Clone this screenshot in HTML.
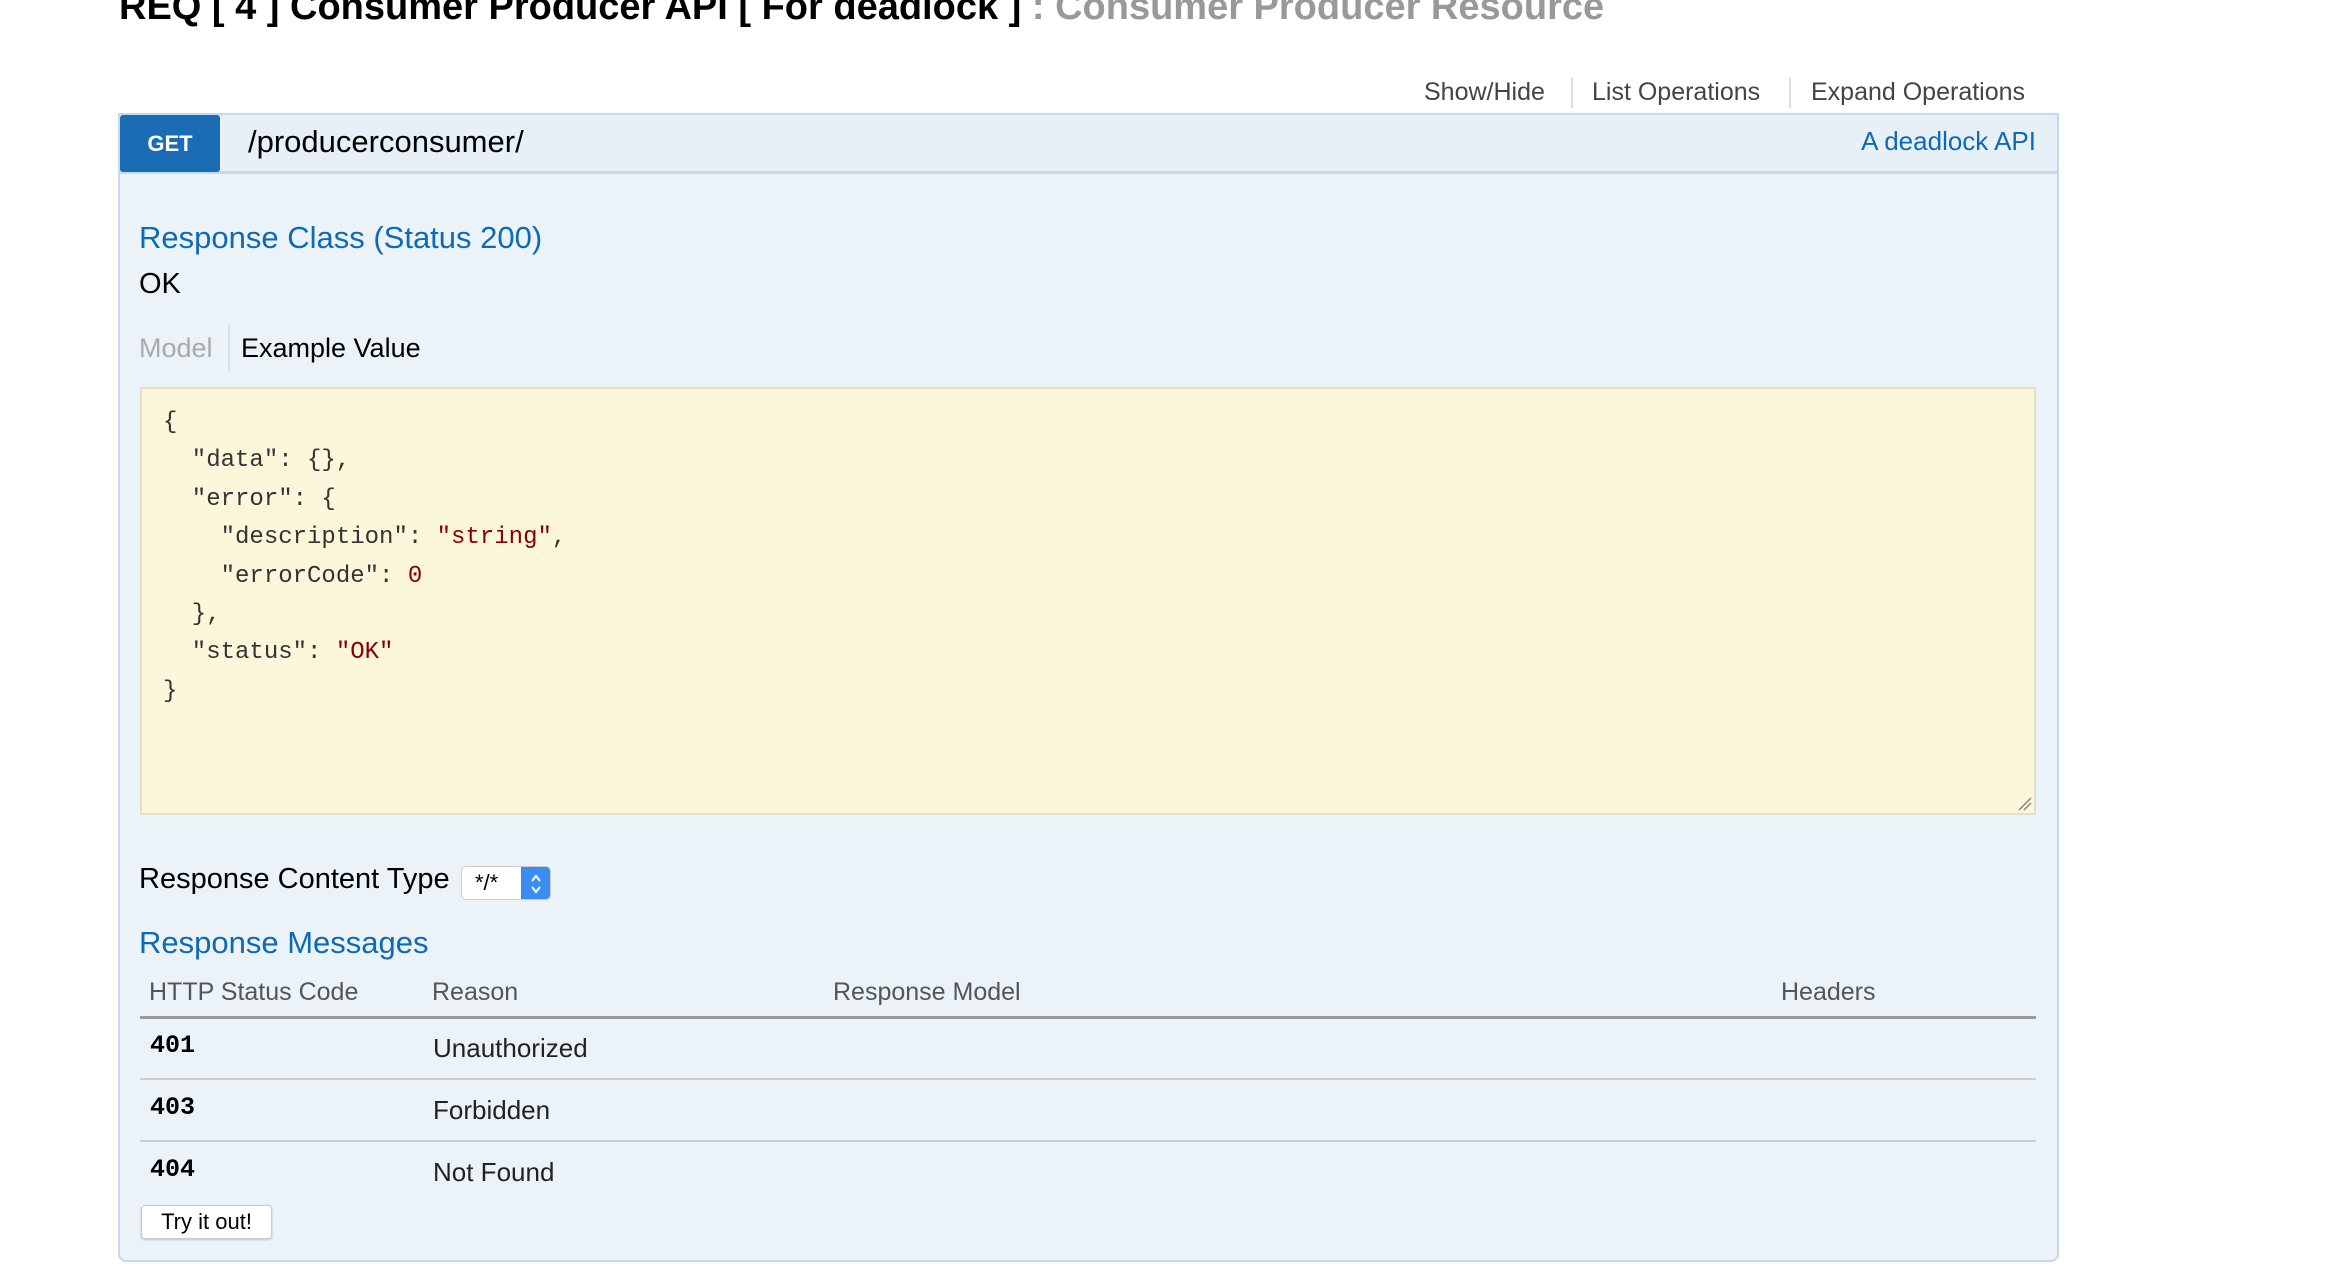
<!DOCTYPE html>
<html><head><meta charset="utf-8"><style>
*{margin:0;padding:0;box-sizing:border-box}
body{width:2336px;height:1282px;background:#fff;font-family:"Liberation Sans",Arial,sans-serif;position:relative;overflow:hidden}
.a{position:absolute;white-space:nowrap}
.blue{color:#0f6ab4}
</style></head><body>
<div class="a" style="left:119px;top:-14px;font-size:38px;font-weight:bold;color:#000">REQ [ 4 ] Consumer Producer API [ For deadlock ] <span style="color:#999">: Consumer Producer Resource</span></div>

<div class="a" style="left:1424px;top:78px;font-size:25px;color:#444">Show/Hide</div>
<div class="a" style="left:1571px;top:78px;width:2px;height:30px;background:#ddd"></div>
<div class="a" style="left:1592px;top:78px;font-size:25px;color:#444">List Operations</div>
<div class="a" style="left:1789px;top:78px;width:2px;height:30px;background:#ddd"></div>
<div class="a" style="left:1811px;top:78px;font-size:25px;color:#444">Expand Operations</div>

<div class="a" style="left:118px;top:113px;width:1941px;height:1149px;background:#ebf3f9;border:2px solid #c3d9ec;border-radius:0 0 8px 8px"></div>
<div class="a" style="left:118px;top:113px;width:1941px;height:61px;background:#e7f0f7;border:2px solid #c3d9ec;border-width:2px 2px 3px 2px"></div>
<div class="a" style="left:120px;top:115px;width:100px;height:57px;background:#1a6cb4;border-radius:3px;color:#fff;font-weight:bold;font-size:22px;line-height:57px;text-align:center">GET</div>
<div class="a" style="left:248px;top:124px;font-size:31px;color:#000">/producerconsumer/</div>
<div class="a blue" style="right:300px;top:126px;font-size:26px">A deadlock API</div>

<div class="a blue" style="left:139px;top:220px;font-size:31px">Response Class (Status 200)</div>
<div class="a" style="left:139px;top:268px;font-size:29px;color:#000">OK</div>
<div class="a" style="left:139px;top:333px;font-size:27px;color:#aaa">Model</div>
<div class="a" style="left:228px;top:325px;width:2px;height:46px;background:#ddd"></div>
<div class="a" style="left:241px;top:333px;font-size:27px;color:#000">Example Value</div>

<div class="a" style="left:140px;top:387px;width:1896px;height:428px;background:#fcf6db;border:2px solid #e5e0c6"></div>
<pre class="a" style="white-space:pre;left:163px;top:404px;font-family:'Liberation Mono',monospace;font-size:24px;line-height:38.4px;color:#333">{
  "data": {},
  "error": {
    "description": <span style="color:#800">"string"</span>,
    "errorCode": <span style="color:#800">0</span>
  },
  "status": <span style="color:#800">"OK"</span>
}</pre>
<svg class="a" style="left:2017px;top:796px" width="16" height="16"><path d="M2 14L14 2M7 14L14 7" stroke="#888" stroke-width="1.5"/></svg>

<div class="a" style="left:139px;top:863px;font-size:29px;color:#000">Response Content Type</div>
<div class="a" style="left:461px;top:866px;width:90px;height:34px;border:1px solid #ccc;border-radius:5px;background:#fff;overflow:hidden">
<span class="a" style="left:13px;top:3px;font-size:22px;color:#000">*/*</span>
<div class="a" style="right:0;top:0;width:29px;height:34px;background:#3b8cf0"></div>
<svg class="a" style="right:7px;top:6px" width="14" height="22"><path d="M3 8L7 3L11 8M3 14L7 19L11 14" stroke="#fff" stroke-width="2" fill="none"/></svg>
</div>

<div class="a blue" style="left:139px;top:925px;font-size:31px">Response Messages</div>
<div class="a" style="left:149px;top:978px;font-size:25px;color:#555">HTTP Status Code</div>
<div class="a" style="left:432px;top:978px;font-size:25px;color:#555">Reason</div>
<div class="a" style="left:833px;top:978px;font-size:25px;color:#555">Response Model</div>
<div class="a" style="left:1781px;top:978px;font-size:25px;color:#555">Headers</div>
<div class="a" style="left:140px;top:1016px;width:1896px;height:3px;background:#999"></div>

<div class="a" style="left:150px;top:1031px;font-family:'Liberation Mono',monospace;font-weight:bold;font-size:25px;color:#000">401</div>
<div class="a" style="left:433px;top:1033px;font-size:26px;color:#222">Unauthorized</div>
<div class="a" style="left:140px;top:1078px;width:1896px;height:2px;background:#ccc"></div>
<div class="a" style="left:150px;top:1093px;font-family:'Liberation Mono',monospace;font-weight:bold;font-size:25px;color:#000">403</div>
<div class="a" style="left:433px;top:1095px;font-size:26px;color:#222">Forbidden</div>
<div class="a" style="left:140px;top:1140px;width:1896px;height:2px;background:#ccc"></div>
<div class="a" style="left:150px;top:1155px;font-family:'Liberation Mono',monospace;font-weight:bold;font-size:25px;color:#000">404</div>
<div class="a" style="left:433px;top:1157px;font-size:26px;color:#222">Not Found</div>

<div class="a" style="left:141px;top:1205px;width:131px;height:34px;background:#fff;border:1px solid #ccc;border-radius:4px;box-shadow:0 1px 2px rgba(0,0,0,.2);font-size:22px;line-height:32px;text-align:center;color:#000">Try it out!</div>
</body></html>
